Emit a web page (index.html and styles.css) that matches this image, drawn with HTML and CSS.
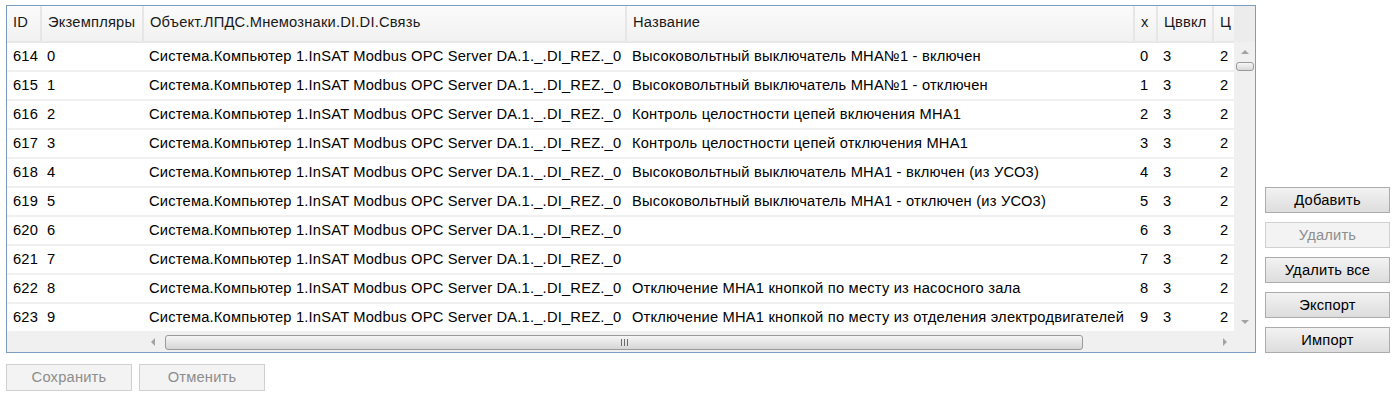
FILE: index.html
```html
<!DOCTYPE html>
<html lang="ru">
<head>
<meta charset="utf-8">
<link rel="stylesheet" href="styles.css">
</head>
<body>
<div class="main">
  <div class="grid">
    <div class="grid-body">
      <div class="cols">
        <table class="tbl">
          <colgroup>
            <col class="c-id"><col class="c-ex"><col class="c-obj"><col class="c-name"><col class="c-x"><col class="c-cv"><col class="c-c">
          </colgroup>
          <thead>
            <tr><th>ID</th><th>Экземпляры</th><th>Объект.ЛПДС.Мнемознаки.DI.DI.Связь</th><th>Название</th><th>x</th><th>Цввкл</th><th>Ц</th></tr>
          </thead>
          <tbody>
            <tr><td>614</td><td>0</td><td>Система.Компьютер 1.InSAT Modbus OPC Server DA.1._.DI_REZ._0</td><td>Высоковольтный выключатель МНА№1 - включен</td><td>0</td><td>3</td><td>2</td></tr>
            <tr><td>615</td><td>1</td><td>Система.Компьютер 1.InSAT Modbus OPC Server DA.1._.DI_REZ._0</td><td>Высоковольтный выключатель МНА№1 - отключен</td><td>1</td><td>3</td><td>2</td></tr>
            <tr><td>616</td><td>2</td><td>Система.Компьютер 1.InSAT Modbus OPC Server DA.1._.DI_REZ._0</td><td>Контроль целостности цепей включения МНА1</td><td>2</td><td>3</td><td>2</td></tr>
            <tr><td>617</td><td>3</td><td>Система.Компьютер 1.InSAT Modbus OPC Server DA.1._.DI_REZ._0</td><td>Контроль целостности цепей отключения МНА1</td><td>3</td><td>3</td><td>2</td></tr>
            <tr><td>618</td><td>4</td><td>Система.Компьютер 1.InSAT Modbus OPC Server DA.1._.DI_REZ._0</td><td>Высоковольтный выключатель МНА1 - включен (из УСО3)</td><td>4</td><td>3</td><td>2</td></tr>
            <tr><td>619</td><td>5</td><td>Система.Компьютер 1.InSAT Modbus OPC Server DA.1._.DI_REZ._0</td><td>Высоковольтный выключатель МНА1 - отключен (из УСО3)</td><td>5</td><td>3</td><td>2</td></tr>
            <tr><td>620</td><td>6</td><td>Система.Компьютер 1.InSAT Modbus OPC Server DA.1._.DI_REZ._0</td><td></td><td>6</td><td>3</td><td>2</td></tr>
            <tr><td>621</td><td>7</td><td>Система.Компьютер 1.InSAT Modbus OPC Server DA.1._.DI_REZ._0</td><td></td><td>7</td><td>3</td><td>2</td></tr>
            <tr><td>622</td><td>8</td><td>Система.Компьютер 1.InSAT Modbus OPC Server DA.1._.DI_REZ._0</td><td>Отключение МНА1 кнопкой по месту из насосного зала</td><td>8</td><td>3</td><td>2</td></tr>
            <tr><td>623</td><td>9</td><td>Система.Компьютер 1.InSAT Modbus OPC Server DA.1._.DI_REZ._0</td><td>Отключение МНА1 кнопкой по месту из отделения электродвигателей</td><td>9</td><td>3</td><td>2</td></tr>
          </tbody>
        </table>
      </div>
      <div class="vscroll">
        <div class="vs-head"></div>
        <div class="vs-track">
          <span class="arr arr-up"></span>
          <span class="vthumb"></span>
          <span class="vs-fill"></span>
          <span class="arr arr-down"></span>
        </div>
      </div>
    </div>
    <div class="hscroll">
      <div class="hs-frozen"></div>
      <div class="hs-track">
        <span class="arr arr-left"></span>
        <span class="hthumb"><span class="grip"></span></span>
        <span class="hs-fill"></span>
        <span class="arr arr-right"></span>
      </div>
      <div class="hs-corner"></div>
    </div>
  </div>
  <div class="side">
    <button class="btn">Добавить</button>
    <button class="btn" disabled>Удалить</button>
    <button class="btn">Удалить все</button>
    <button class="btn">Экспорт</button>
    <button class="btn">Импорт</button>
  </div>
</div>
<div class="footer">
  <button class="btn btn-foot" disabled>Сохранить</button>
  <button class="btn btn-foot" disabled>Отменить</button>
</div>
</body>
</html>
```

FILE: styles.css
```css
* { box-sizing: border-box; }
html, body { margin: 0; padding: 0; background: #fff; }
body {
  font-family: "Liberation Sans", Arial, sans-serif;
  font-size: 14.7px;
  letter-spacing: 0.2px;
  color: #000;
}
.main {
  display: flex;
  gap: 9px;
  padding: 5px 0 0 6px;
}
.grid {
  width: 1250px;
  height: 348px;
  border: 1px solid #7c9cc2;
  display: flex;
  flex-direction: column;
  background: #fff;
}
.grid-body {
  display: flex;
  height: 326px;
}
.cols {
  width: 1227px;
  overflow: hidden;
}
.tbl {
  border-collapse: collapse;
  table-layout: fixed;
  width: 1227px;
}
.c-id { width: 34px; }
.c-ex { width: 102px; }
.c-obj { width: 483px; }
.c-name { width: 508px; }
.c-x { width: 23px; }
.c-cv { width: 56px; }
.c-c { width: 21px; }
.tbl th {
  height: 36px;
  padding: 0 0 3px 6px;
  font-weight: normal;
  text-align: left;
  white-space: nowrap;
  overflow: hidden;
  color: #1a1a1a;
  background: linear-gradient(#fbfbfb, #f1f1f1);
  border-right: 2px solid #e6e6e6;
  border-bottom: 2px solid #e8e8e8;
}
.tbl th:last-child { border-right: 0; }
.tbl td {
  height: 29px;
  padding: 0 0 2px 6px;
  white-space: nowrap;
  overflow: hidden;
  border-bottom: 2px solid #f0f0f0;
}
.tbl td:nth-child(7) { padding-left: 7px; }
.vscroll {
  width: 21px;
  display: flex;
  flex-direction: column;
  background: #f0f0f0;
}
.vs-head { height: 36px; background: #ececec; }
.vs-track {
  flex: 1;
  display: flex;
  flex-direction: column;
  align-items: center;
  padding: 8px 0 8px;
}
.vs-fill { flex: 1; }
.vthumb {
  width: 18px;
  height: 9px;
  margin-top: 8px;
  border: 1px solid #9a9a9a;
  border-radius: 3px;
  background: linear-gradient(#f6f6f6, #d9d9d9);
}
.arr { width: 0; height: 0; display: block; }
.arr-up {
  border-left: 4px solid transparent;
  border-right: 4px solid transparent;
  border-bottom: 4px solid #a3a3a3;
}
.arr-down {
  border-left: 4px solid transparent;
  border-right: 4px solid transparent;
  border-top: 4px solid #a3a3a3;
}
.hscroll {
  height: 20px;
  display: flex;
  background: #f0f0f0;
}
.hs-frozen { width: 136px; }
.hs-track {
  flex: 1;
  display: flex;
  align-items: center;
  padding: 0 7px 0 8px;
}
.hs-fill { flex: 1; }
.arr-left {
  border-top: 4px solid transparent;
  border-bottom: 4px solid transparent;
  border-right: 4px solid #a3a3a3;
}
.arr-right {
  border-top: 4px solid transparent;
  border-bottom: 4px solid transparent;
  border-left: 4px solid #a3a3a3;
}
.hthumb {
  width: 918px;
  height: 15px;
  margin-left: 10px;
  border: 1px solid #9a9a9a;
  border-radius: 3px;
  background: linear-gradient(#f6f6f6, #d5d5d5);
  display: flex;
  align-items: center;
  justify-content: center;
}
.grip {
  width: 7px;
  height: 7px;
  background: repeating-linear-gradient(90deg, #6a6a6a 0 1px, transparent 1px 3px);
}
.hs-corner { width: 21px; background: #f0f0f0; }
.side {
  display: flex;
  flex-direction: column;
  gap: 9px;
  align-self: flex-end;
}
.btn {
  width: 125px;
  height: 26px;
  font-family: "Liberation Sans", Arial, sans-serif;
  font-size: 14.7px;
  letter-spacing: 0.2px;
  color: #000;
  border: 1px solid #acacac;
  border-radius: 0;
  background: linear-gradient(#f2f2f2, #dddddd);
  padding: 0 0 1px;
}
.btn:disabled {
  color: #8d8d8d;
  border-color: #d0d0d0;
  background: #f3f3f3;
}
.footer {
  display: flex;
  gap: 7px;
  padding: 11px 0 0 6px;
}
.btn-foot {
  width: 126px;
  height: 27px;
}
```
